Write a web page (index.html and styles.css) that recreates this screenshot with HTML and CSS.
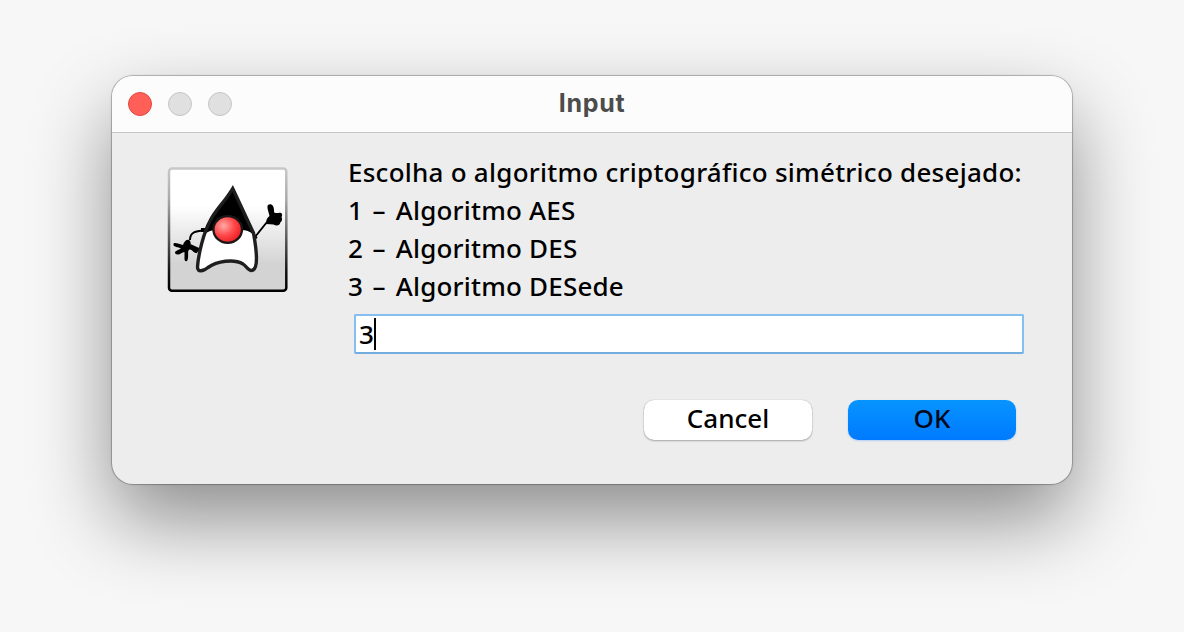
FILE: index.html
```html
<!DOCTYPE html>
<html lang="pt">
<head>
<meta charset="utf-8">
<title>Input</title>
<link rel="stylesheet" href="styles.css">
</head>
<body>
<main class="dialog">
  <header class="titlebar">
    <div class="controls"><i class="dot close"></i><i class="dot"></i><i class="dot"></i></div>
    <h1 class="title">Input</h1>
  </header>
  <section class="content">
    <svg class="duke" viewBox="167 166 122 127" width="122" height="127" aria-hidden="true">
      <defs>
        <linearGradient id="panel" x2="0" y2="1"><stop offset=".3" stop-color="#fff"/><stop offset=".78" stop-color="#d3d3d3"/><stop offset="1" stop-color="#d3d3d3"/></linearGradient>
        <linearGradient id="frame" x2="0" y2="1"><stop stop-color="#c8c8c8"/><stop offset=".25" stop-color="#aaa"/><stop offset=".85" stop-color="#111"/><stop offset="1" stop-color="#000"/></linearGradient>
        <radialGradient id="nose" cx=".36" cy=".36" r=".7"><stop stop-color="#ffaaa5"/><stop offset=".55" stop-color="#ff4548"/><stop offset="1" stop-color="#e61c20"/></radialGradient>
      </defs>
      <rect x="169" y="168.5" width="117.3" height="122.2" rx="3" fill="url(#panel)" stroke="url(#frame)" stroke-width="2.5"/>
      <path d="M204 230.500C196 231 190 232 190 240M255 237L267 222" fill="none" stroke="#000" stroke-width="2"/>
      <path d="M190 246L199 250M201 230H206M253 235L256 239" fill="none" stroke="#000" stroke-width="4"/>
      <path d="M197 253C193 253 192 249 189.500 249.500C187 250 189 257 187.500 260C187 262 184.500 261.500 184.500 259L184.500 252C182 252 180 255 177.500 254.500C174 254 174.500 251.500 177 250.500L181 248.500C178 247 174 247 173.500 245C173 242.500 175.500 242.500 178 243.500L183 245C184 241 187 239 189 240C191.500 241 190 245 192 247L199 249Z"/>
      <path d="M266 224C266 220 267 218 269.500 216C268.500 211 266.500 207 268 205C269.500 203.500 272 204 273 206C275 210 273 212 275 213H278.500C282 212 283 215 281.500 217C283 220 281 222 280.500 222C280 226 276 226 273.500 224.500Z"/>
      <path d="M232.700 188.500L253.500 233C256 247 259.500 270 251.500 270.500C249 271 247 267 243 264C234 258.500 217 261 208 267.500C203 271.500 197.500 272.500 197.500 267C198.500 253 204 232 210 221C216 209 224 203 232.700 188.500Z" fill="#fff"/>
      <path d="M232.700 188.500L210 221C207 227 204.500 231 204 235C208 231 212 230 216 230H240C246 230 250 231 253.500 235V233Z"/>
      <path d="M232.700 188.500L253.500 233C256 247 259.500 270 251.500 270.500C249 271 247 267 243 264C234 258.500 217 261 208 267.500C203 271.500 197.500 272.500 197.500 267C198.500 253 204 232 210 221C216 209 224 203 232.700 188.500Z" fill="none" stroke="#1e1e1e" stroke-width="3.400"/>
      <ellipse cx="227.700" cy="229.500" rx="14.300" ry="13.300" fill="url(#nose)" stroke="#1b1717" stroke-width="2.300"/>
    </svg>
    <form class="form">
      <div class="message">
        <p class="prompt">Escolha o algoritmo criptográfico simétrico desejado:</p>
        <p>1 <span class="dash">–</span> Algoritmo AES</p>
        <p>2 <span class="dash">–</span> Algoritmo DES</p>
        <p>3 <span class="dash">–</span> Algoritmo DESede</p>
      </div>
      <div class="field"><span>3</span><i class="caret"></i></div>
      <div class="actions">
        <button type="button" class="button">Cancel</button>
        <button type="button" class="button primary">OK</button>
      </div>
    </form>
  </section>
</main>
</body>
</html>
```
FILE: styles.css
```css
* { box-sizing: border-box; }
body {
  margin: 0;
  height: 632px;
  padding: 76px 112px 0;
  overflow: hidden;
  background: #f7f7f7;
  color: #000;
  font-family: "Noto Sans", sans-serif;
}
.dialog {
  width: 960px;
  height: 408px;
  overflow: hidden;
  border-radius: 21px;
  background: #ededed;
  box-shadow: 0 0 0 1px rgba(0, 0, 0, .2), 0 0 3px rgba(0, 0, 0, .15), 0 36px 80px rgba(0, 0, 0, .43);
}
.titlebar {
  display: grid;
  grid-template-columns: 1fr auto 1fr;
  align-items: center;
  height: 57px;
  padding: 0 16px;
  background: #fcfcfc;
  border-bottom: 1px solid #c5c5c5;
}
.controls { display: flex; gap: 16px; }
.dot {
  width: 24px;
  height: 24px;
  border: 1px solid #c4c4c4;
  border-radius: 50%;
  background: #e0e0e0;
}
.close { background: #ff5f57; border-color: #df4a43; }
.title {
  margin: 0;
  padding-bottom: 2px;
  font: 700 25px/30px Inter, sans-serif;
  letter-spacing: .7px;
  color: #4c4c4c;
}
.content {
  display: flex;
  align-items: flex-start;
  padding: 20px 48px 0 55px;
}
.duke { flex: none; margin-top: 13px; }
.form { flex: 1; padding-left: 59px; }
.message p {
  margin: 0;
  height: 38px;
  font-size: 26px;
  font-weight: 500;
  line-height: 38px;
  letter-spacing: .2px;
  white-space: nowrap;
}
.message .prompt { letter-spacing: .25px; }
.dash { margin: 0 3px 0 2.5px; }
.field {
  display: flex;
  align-items: center;
  width: 670px;
  height: 40px;
  margin: 9px 0 0 6px;
  padding-left: 3px;
  border: 2px solid #85bff2;
  border-bottom-color: #73ade0;
  border-radius: 2px;
  background: #fff;
  font-size: 26px;
  font-weight: 500;
}
.caret { width: 2px; height: 32px; background: #000; }
.actions {
  display: flex;
  justify-content: flex-end;
  gap: 36px;
  padding: 46px 8px 0 0;
}
.button {
  width: 168px;
  height: 40px;
  padding: 0 0 4px;
  border: 0;
  border-radius: 10px;
  background: #fff;
  box-shadow: 0 0 1px rgba(0, 0, 0, .3), 0 1px 2px rgba(0, 0, 0, .28);
  color: #000;
  font: 500 26px/36px "Noto Sans", sans-serif;
}
.primary {
  background: linear-gradient(#0794ff, #007aff);
  box-shadow: 0 1px 2px rgba(0, 122, 255, .25);
  color: #00081c;
}
```
